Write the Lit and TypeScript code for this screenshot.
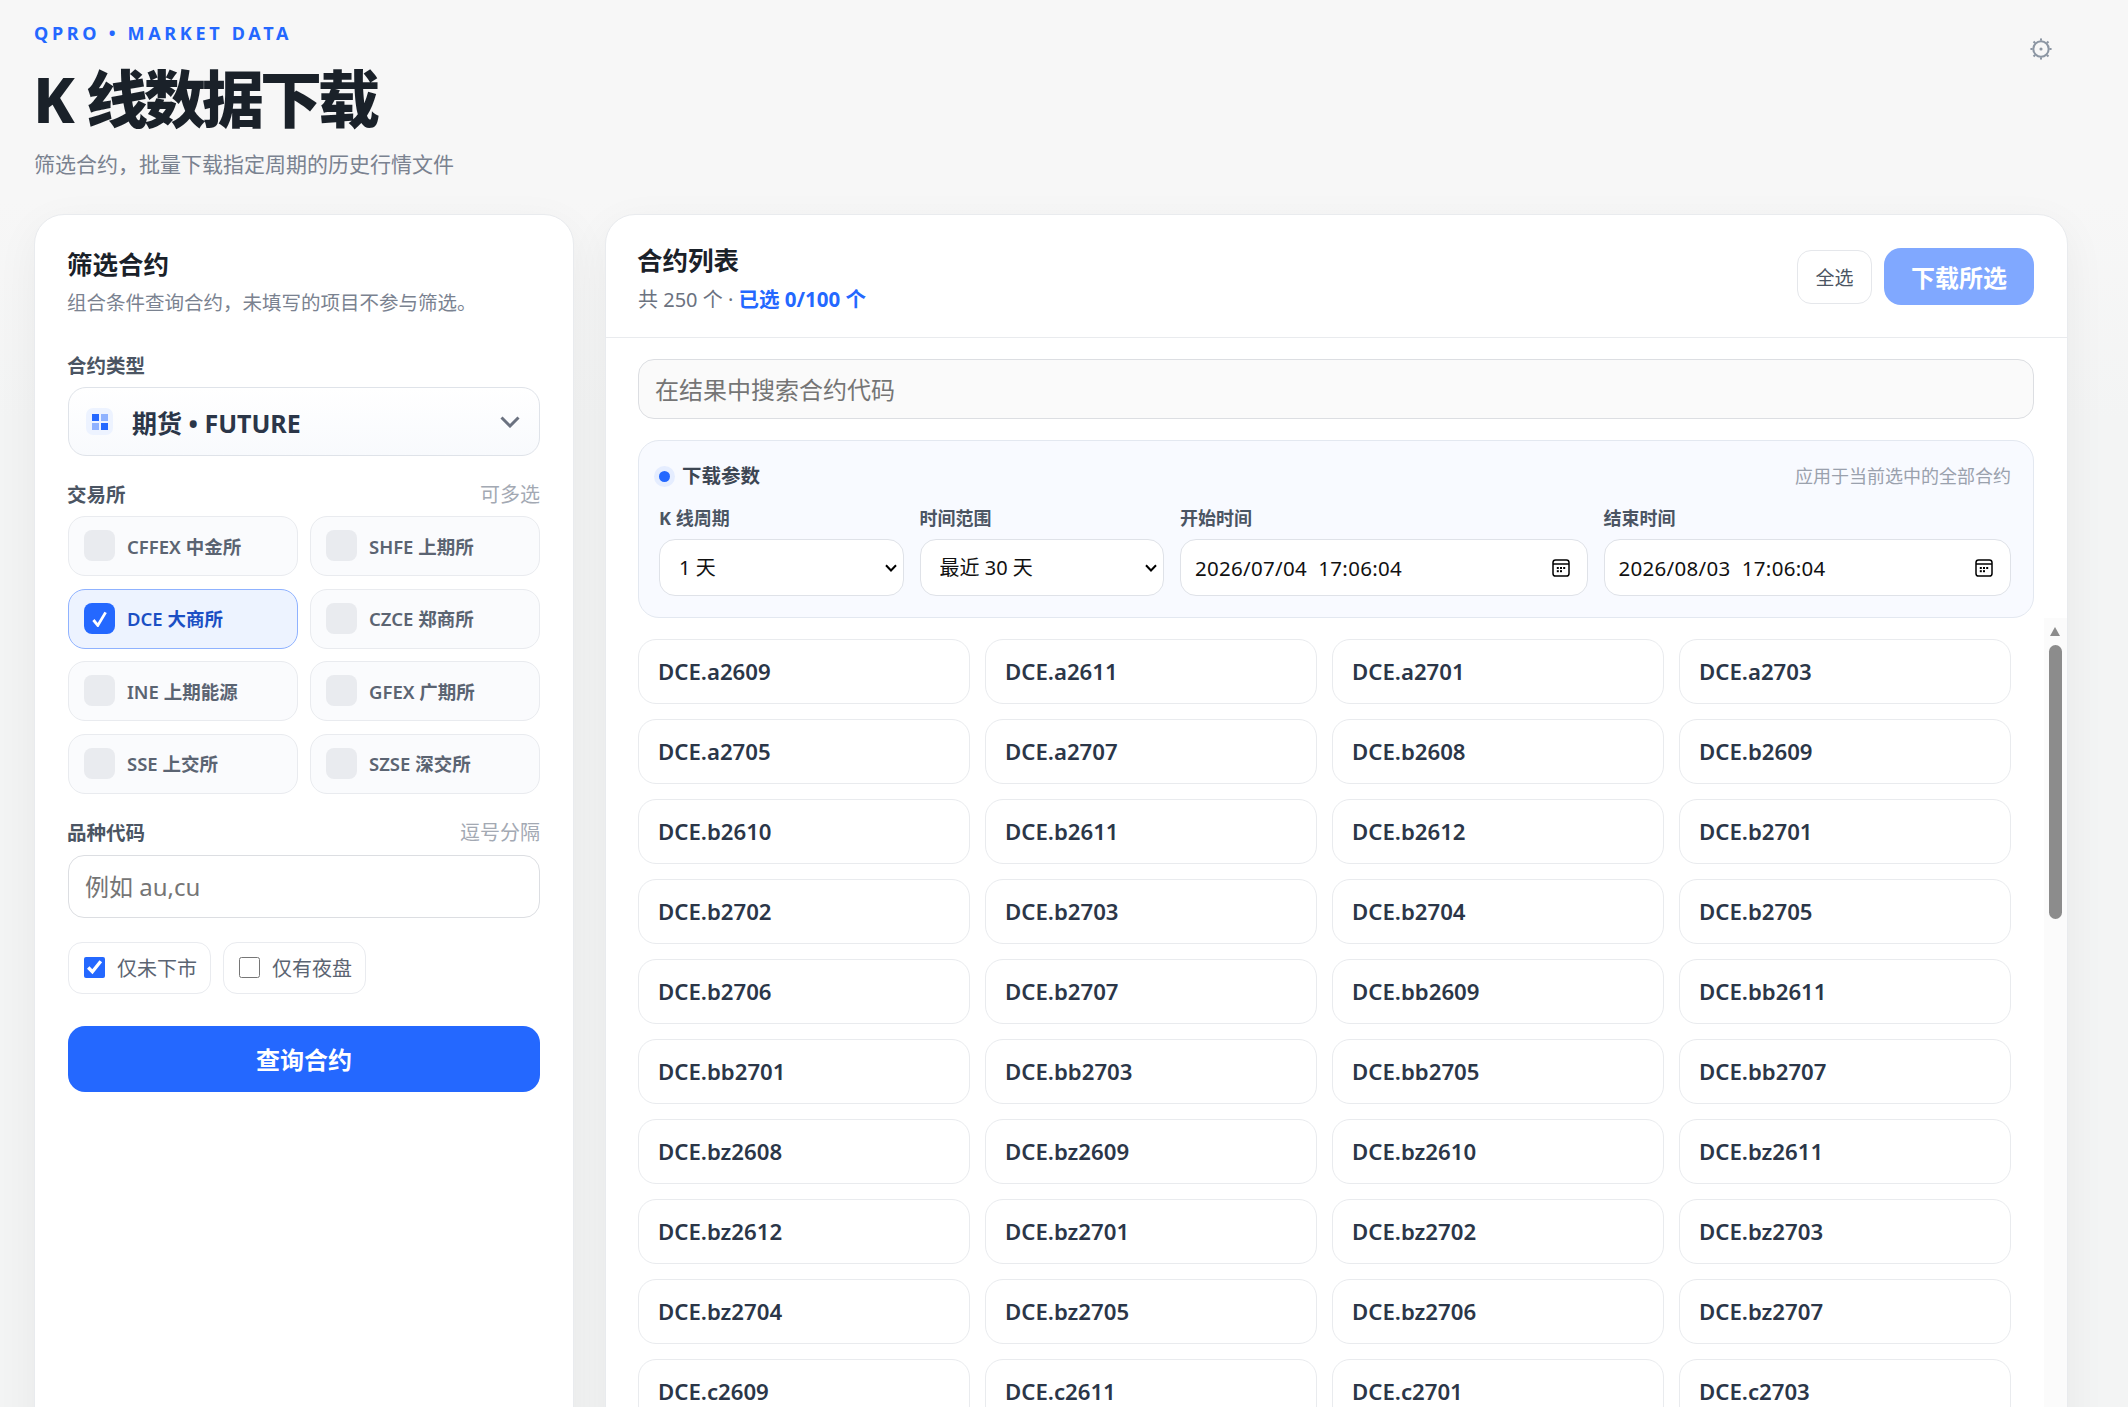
import { LitElement, html, css, svg } from "lit";
import { customElement } from "lit/decorators.js";

const EXCHANGES = [
  ["CFFEX 中金所", false],
  ["SHFE 上期所", false],
  ["DCE 大商所", true],
  ["CZCE 郑商所", false],
  ["INE 上期能源", false],
  ["GFEX 广期所", false],
  ["SSE 上交所", false],
  ["SZSE 深交所", false],
] as const;

const CONTRACTS = [
  "a2609", "a2611", "a2701", "a2703", "a2705", "a2707", "b2608", "b2609",
  "b2610", "b2611", "b2612", "b2701", "b2702", "b2703", "b2704", "b2705",
  "b2706", "b2707", "bb2609", "bb2611", "bb2701", "bb2703", "bb2705", "bb2707",
  "bz2608", "bz2609", "bz2610", "bz2611", "bz2612", "bz2701", "bz2702", "bz2703",
  "bz2704", "bz2705", "bz2706", "bz2707", "c2609", "c2611", "c2701", "c2703",
];

const gearTicks = [0, 45, 90, 135, 180, 225, 270, 315].map(
  (deg) => svg`<line x1="10" y1="1.2" x2="10" y2="3" transform="rotate(${deg} 10 10)"></line>`
);

const calendarIcon = html`
  <svg class="cal" width="18" height="18" viewBox="0 0 18 18" fill="none" stroke="#000" stroke-width="1.5">
    <rect x="1" y="1" width="16" height="16" rx="2.6"></rect>
    <path d="M1 5h16"></path>
    <g fill="#000" stroke="none">
      <rect x="4.8" y="8" width="2" height="2"></rect>
      <rect x="8" y="8" width="2" height="2"></rect>
      <rect x="11.2" y="8" width="2" height="2"></rect>
      <rect x="4.8" y="11.2" width="2" height="2"></rect>
      <rect x="8" y="11.2" width="2" height="2"></rect>
    </g>
  </svg>
`;

@customElement("app-root")
export class AppRoot extends LitElement {
  static styles = css`
    :host {
      display: block;
      height: 100vh;
      overflow: hidden;
      background: linear-gradient(180deg, #f7f7f7 0, #f7f7f7 200px, #f3f4f4 420px);
      color: #1a2129;
      font-family: "Noto Sans", "Noto Sans CJK SC", sans-serif;
    }
    * {
      box-sizing: border-box;
    }
    .page {
      padding: 22px 60px 0 34px;
    }
    .hero {
      display: flex;
      justify-content: space-between;
      height: 192px;
    }
    .eyebrow {
      font-size: 18px;
      line-height: 22px;
      font-weight: 700;
      letter-spacing: 3.7px;
      color: #2468ff;
    }
    h1 {
      margin: 15px 0 0 -1px;
      font-size: 62px;
      line-height: 80px;
      font-weight: 800;
      letter-spacing: -4px;
      word-spacing: 3px;
    }
    .lead {
      margin: 10px 0 0;
      font-size: 21px;
      line-height: 30px;
      color: #7a8290;
    }
    .gear {
      margin: 15px 15px 0 0;
      color: #8c96a3;
    }
    .layout {
      display: grid;
      grid-template-columns: 540px 1fr;
      gap: 31px;
      align-items: start;
    }
    .card {
      background: #fff;
      border: 1px solid #e9ebee;
      border-radius: 30px;
      box-shadow: 0 12px 44px rgba(20, 30, 45, 0.05);
      height: 1300px;
    }
    .filters {
      padding: 31px 33px 0;
    }
    h2 {
      margin: 0 0 0 -1px;
      font-size: 25.5px;
      line-height: 36px;
      font-weight: 700;
    }
    .filters .hint {
      margin: 8px 0 0 -1px;
      font-size: 19.5px;
      line-height: 26px;
      color: #7a8290;
    }
    .label {
      display: flex;
      justify-content: space-between;
      align-items: center;
      margin-left: -1px;
      font-size: 19.5px;
      line-height: 28px;
      font-weight: 700;
      color: #4b5563;
    }
    .label span {
      font-size: 20px;
      font-weight: 400;
      color: #a3a9b3;
    }
    .type-label {
      margin-top: 36px;
    }
    .type {
      display: flex;
      align-items: center;
      height: 69px;
      margin-top: 7px;
      padding: 0 19px 0 17px;
      border: 1px solid #dfe3e9;
      border-radius: 18px;
      background: linear-gradient(180deg, #fff, #f8fafd);
      font-size: 25px;
      font-weight: 700;
      color: #2b3648;
    }
    .type-icon {
      display: grid;
      grid-template-columns: 7px 7px;
      gap: 2px;
      place-content: center;
      width: 27px;
      height: 27px;
      margin-right: 19px;
      border-radius: 7px;
      background: #edf3ff;
    }
    .type-icon i {
      height: 7px;
      background: #2468ff;
    }
    .type-icon i.soft {
      background: #8fb2ff;
    }
    .type-text {
      flex: 1;
    }
    .exchange-label {
      margin-top: 25px;
    }
    .exchanges {
      display: grid;
      grid-template-columns: 1fr 1fr;
      gap: 12.5px 12px;
      margin-top: 7px;
    }
    .exchange {
      display: flex;
      align-items: center;
      height: 60px;
      padding: 0 15px 1px;
      border: 1px solid #e9ebef;
      border-radius: 17px;
      background: #fafbfd;
      font-size: 18.5px;
      font-weight: 600;
      color: #5b6472;
    }
    .exchange .box {
      display: grid;
      place-items: center;
      width: 31px;
      height: 31px;
      margin-right: 12px;
      border-radius: 8px;
      background: #e9ebef;
    }
    .exchange.on {
      border-color: #8fb2ff;
      background: #edf3ff;
      color: #1b4fc4;
    }
    .exchange.on .box {
      background: #2468ff;
    }
    .code-label {
      margin-top: 25px;
    }
    .text-input {
      display: block;
      width: 100%;
      height: 63px;
      padding: 0 16px;
      border: 1px solid #dcdee2;
      border-radius: 16px;
      background: #fff;
      font: inherit;
      font-size: 24px;
      outline: none;
    }
    .text-input::placeholder {
      color: #757575;
    }
    .code-input {
      margin-top: 8px;
    }
    .toggles {
      display: flex;
      gap: 12px;
      margin-top: 24px;
    }
    .toggle {
      display: flex;
      align-items: center;
      gap: 12px;
      width: 143px;
      height: 52px;
      padding-left: 15px;
      border: 1px solid #e9ebef;
      border-radius: 14px;
      font-size: 20px;
      white-space: nowrap;
      color: #5b6472;
    }
    .toggle input {
      flex: none;
      width: 21px;
      height: 21px;
      margin: 0;
      accent-color: #2468ff;
    }
    .primary {
      display: block;
      width: 100%;
      height: 66px;
      margin-top: 32px;
      border: 0;
      border-radius: 17px;
      background: #2468ff;
      color: #fff;
      font: inherit;
      font-size: 24px;
      font-weight: 700;
    }
    .results-head {
      display: flex;
      justify-content: space-between;
      align-items: center;
      height: 123px;
      padding: 0 33px 0 32px;
      border-bottom: 1px solid #e9ebee;
    }
    .results-title {
      padding-top: 4px;
    }
    .count {
      margin-top: 7px;
      font-size: 20px;
      line-height: 28px;
      color: #6b7280;
    }
    .count b {
      color: #2468ff;
      font-size: 20.5px;
      font-weight: 700;
    }
    .actions {
      display: flex;
      align-items: center;
      gap: 12px;
    }
    .ghost {
      width: 75px;
      height: 54px;
      margin-top: 2px;
      border: 1px solid #e5e7eb;
      border-radius: 14px;
      background: #fff;
      color: #4b5563;
      font: inherit;
      font-size: 19px;
    }
    .download {
      width: 150px;
      height: 57px;
      border: 0;
      border-radius: 17px;
      background: #80a8ff;
      color: #fff;
      font: inherit;
      font-size: 24px;
      font-weight: 700;
    }
    .results-body {
      padding: 21px 33px 0 32px;
    }
    .search {
      height: 60px;
      background: #fafafa;
    }
    .params {
      margin-top: 21px;
      height: 178px;
      padding: 21px 22px 0 20px;
      border: 1px solid #e3e8f0;
      border-radius: 21px;
      background: #f8faff;
    }
    .params-head {
      display: flex;
      align-items: center;
      font-size: 19.5px;
      line-height: 28px;
      font-weight: 700;
      color: #3d4653;
    }
    .dot {
      width: 11px;
      height: 11px;
      margin: 0 12px 0 0;
      border-radius: 50%;
      background: #2468ff;
      box-shadow: 0 0 0 5px #e5edff;
    }
    .params-title {
      flex: 1;
    }
    .params-note {
      font-size: 18px;
      font-weight: 400;
      color: #9aa1ad;
    }
    .fields {
      display: grid;
      grid-template-columns: 0.6fr 0.6fr 1fr 1fr;
      gap: 16px;
      margin-top: 15px;
    }
    .field label {
      display: block;
      font-size: 18px;
      line-height: 26px;
      font-weight: 700;
      color: #4b5563;
    }
    .field select,
    .date {
      display: block;
      width: 100%;
      height: 57px;
      margin-top: 8px;
      border: 1px solid #dfe2e8;
      border-radius: 16px;
      background: #fff;
      color: #111;
      font: inherit;
      font-size: 20px;
      outline: none;
    }
    .field select {
      appearance: none;
      padding: 0 24px 0 19px;
      background: #fff
        url("data:image/svg+xml,%3Csvg xmlns='http://www.w3.org/2000/svg' width='12' height='8' fill='none' stroke='%23000' stroke-width='2'%3E%3Cpath d='M1 1.2 6 6.5l5-5.3'/%3E%3C/svg%3E")
        no-repeat right 6px center;
    }
    .date {
      display: flex;
      align-items: center;
      padding: 0 17px 0 14px;
    }
    .date input {
      flex: 1;
      min-width: 0;
      border: 0;
      padding: 0;
      background: none;
      color: #111;
      font: inherit;
      letter-spacing: 0.3px;
      font-size: 20.5px;
      outline: none;
    }
    .list {
      position: relative;
      height: 800px;
      margin-right: -33px;
      padding: 21px 56px 0 0;
    }
    .grid {
      display: grid;
      grid-template-columns: repeat(4, 1fr);
      gap: 15px;
    }
    .contract {
      display: flex;
      align-items: center;
      height: 65px;
      padding: 0 19px 1px;
      border: 1px solid #e9ebee;
      border-radius: 18px;
      background: #fff;
      font-size: 22.2px;
      font-weight: 600;
      color: #2b3648;
    }
    .scrollbar {
      position: absolute;
      top: 0;
      right: 0;
      bottom: 0;
      width: 23px;
      background: #fbfbfb;
    }
    .arrow {
      position: absolute;
      top: 9px;
      left: 6px;
      width: 0;
      height: 0;
      border: 5.5px solid transparent;
      border-top: 0;
      border-bottom: 9px solid #8c8c8c;
    }
    .thumb {
      position: absolute;
      top: 27px;
      left: 5px;
      width: 13px;
      height: 274px;
      border-radius: 7px;
      background: #8c8c8c;
    }
  `;

  render() {
    return html`
      <div class="page">
        <header class="hero">
          <div>
            <div class="eyebrow">QPRO • MARKET DATA</div>
            <h1>K 线数据下载</h1>
            <p class="lead">筛选合约，批量下载指定周期的历史行情文件</p>
          </div>
          <svg class="gear" width="24" height="24" viewBox="0 0 20 20" fill="none" stroke="currentColor" stroke-width="1.7">
            <circle cx="10" cy="10" r="6.4"></circle>
            <circle cx="10" cy="10" r="1.3" fill="currentColor" stroke="none"></circle>
            ${gearTicks}
          </svg>
        </header>
        <div class="layout">
          <section class="card filters">
            <h2>筛选合约</h2>
            <p class="hint">组合条件查询合约，未填写的项目不参与筛选。</p>
            <div class="label type-label">合约类型</div>
            <div class="type">
              <span class="type-icon"><i></i><i class="soft"></i><i class="soft"></i><i></i></span>
              <span class="type-text">期货 • FUTURE</span>
              <svg width="20" height="12" viewBox="0 0 20 12" fill="none" stroke="#6b7280" stroke-width="3">
                <path d="M1.5 1.5 10 10l8.5-8.5"></path>
              </svg>
            </div>
            <div class="label exchange-label">交易所<span>可多选</span></div>
            <div class="exchanges">
              ${EXCHANGES.map(
                ([name, on]) => html`
                  <div class="exchange ${on ? "on" : ""}">
                    <span class="box">
                      ${on
                        ? html`<svg width="18" height="18" viewBox="0 0 18 18" fill="none" stroke="#fff" stroke-width="2.8">
                            <path d="M2.4 11 6.8 16.4 14.6 3.4"></path>
                          </svg>`
                        : ""}
                    </span>
                    ${name}
                  </div>
                `
              )}
            </div>
            <div class="label code-label">品种代码<span>逗号分隔</span></div>
            <input class="text-input code-input" placeholder="例如 au,cu" />
            <div class="toggles">
              <label class="toggle"><input type="checkbox" checked />仅未下市</label>
              <label class="toggle"><input type="checkbox" />仅有夜盘</label>
            </div>
            <button class="primary">查询合约</button>
          </section>
          <section class="card">
            <div class="results-head">
              <div class="results-title">
                <h2>合约列表</h2>
                <div class="count">共 250 个 · <b>已选 0/100 个</b></div>
              </div>
              <div class="actions">
                <button class="ghost">全选</button>
                <button class="download">下载所选</button>
              </div>
            </div>
            <div class="results-body">
              <input class="text-input search" placeholder="在结果中搜索合约代码" />
              <div class="params">
                <div class="params-head">
                  <span class="dot"></span>
                  <span class="params-title">下载参数</span>
                  <span class="params-note">应用于当前选中的全部合约</span>
                </div>
                <div class="fields">
                  <div class="field">
                    <label>K 线周期</label>
                    <select><option>1 天</option></select>
                  </div>
                  <div class="field">
                    <label>时间范围</label>
                    <select><option>最近 30 天</option></select>
                  </div>
                  <div class="field">
                    <label>开始时间</label>
                    <div class="date"><input value="2026/07/04  17:06:04" />${calendarIcon}</div>
                  </div>
                  <div class="field">
                    <label>结束时间</label>
                    <div class="date"><input value="2026/08/03  17:06:04" />${calendarIcon}</div>
                  </div>
                </div>
              </div>
              <div class="list">
                <div class="grid">
                  ${CONTRACTS.map((c) => html`<div class="contract">DCE.${c}</div>`)}
                </div>
                <div class="scrollbar"><div class="arrow"></div><div class="thumb"></div></div>
              </div>
            </div>
          </section>
        </div>
      </div>
    `;
  }
}
